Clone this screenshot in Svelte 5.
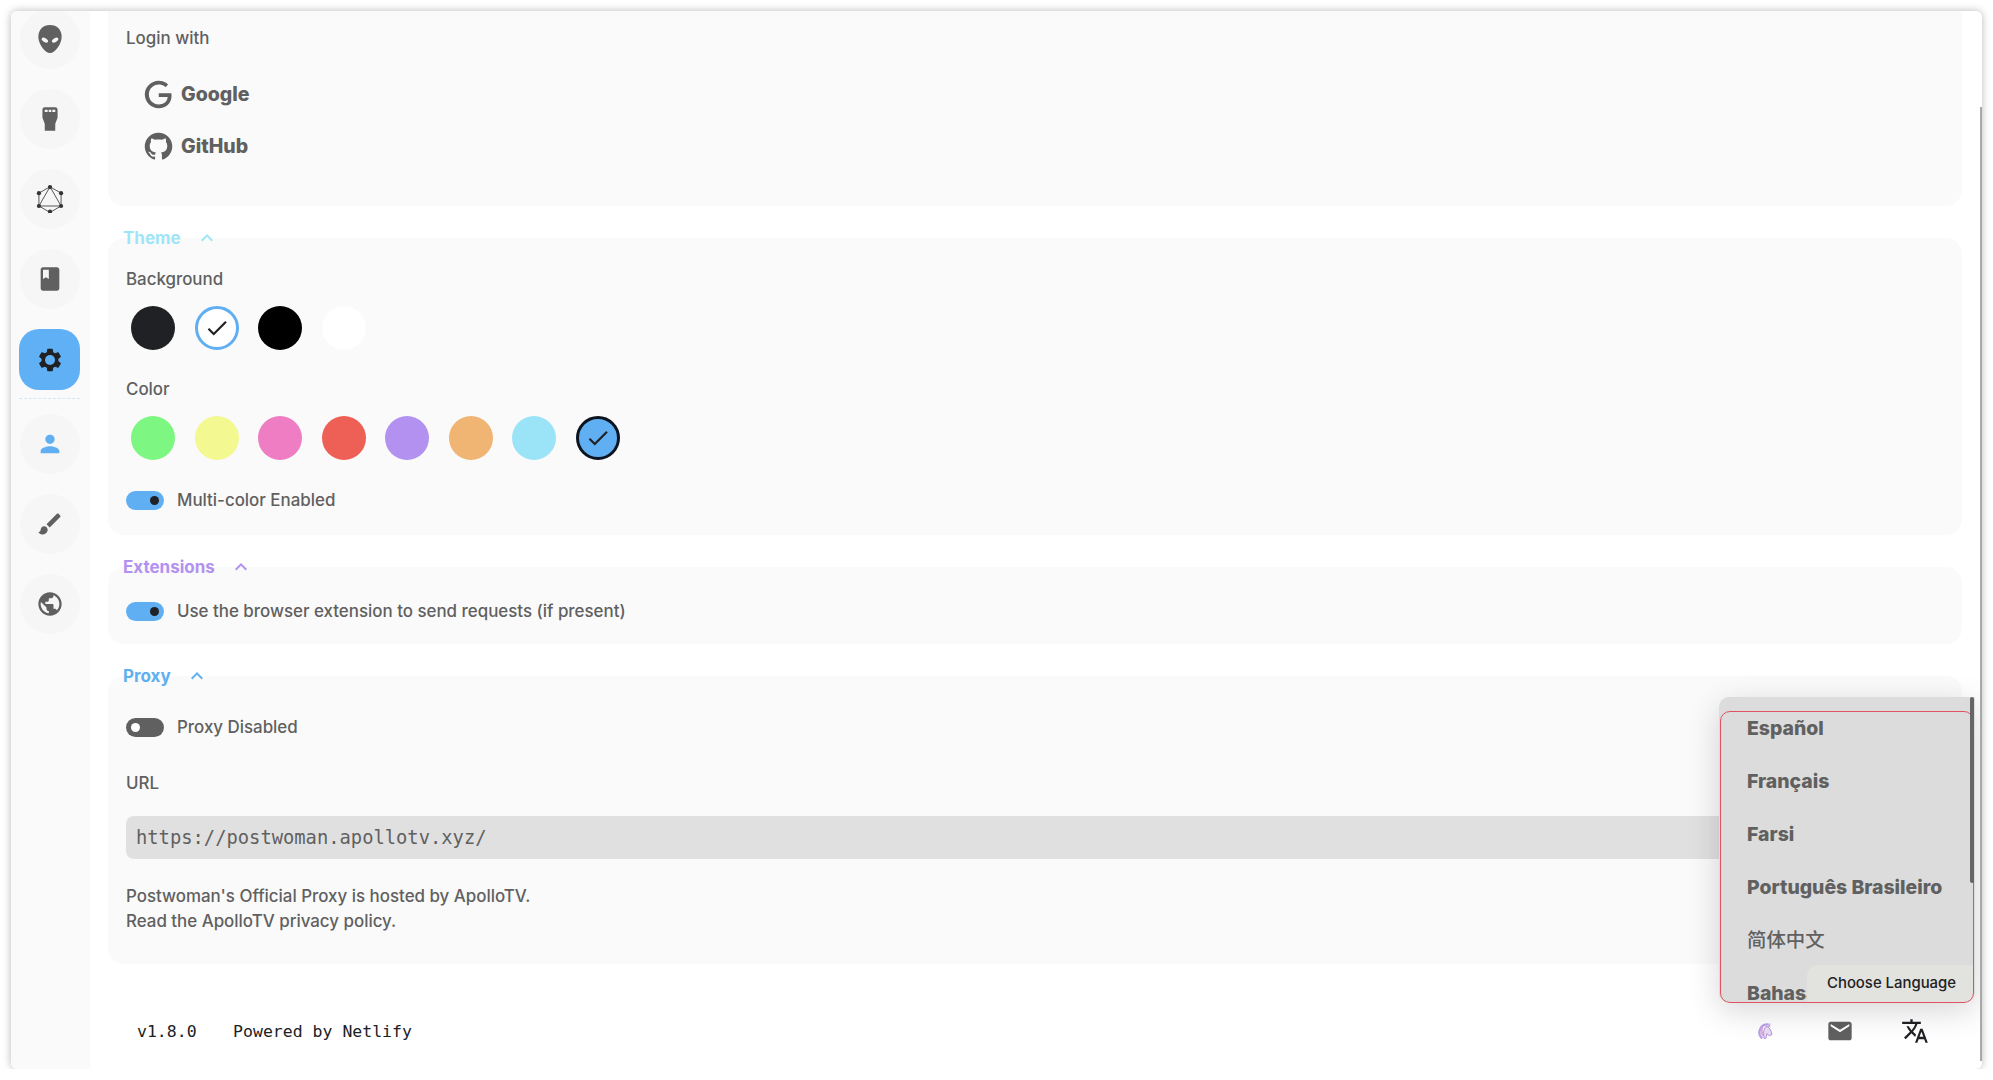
<script>
  // Settings page of the API client, scrolled down, with the language menu open.
  const paths = {
    book: 'M18 2H6c-1.1 0-2 .9-2 2v16c0 1.1.9 2 2 2h12c1.1 0 2-.9 2-2V4c0-1.1-.9-2-2-2zM6 4h5v8l-2.5-1.5L6 12V4z',
    settings: 'M19.14 12.94c.04-.3.06-.61.06-.94 0-.32-.02-.64-.07-.94l2.03-1.58c.18-.14.23-.41.12-.61l-1.92-3.32c-.12-.22-.37-.29-.59-.22l-2.39.96c-.5-.38-1.03-.7-1.62-.94l-.36-2.54c-.04-.24-.24-.41-.48-.41h-3.84c-.24 0-.43.17-.47.41l-.36 2.54c-.59.24-1.13.57-1.62.94l-2.39-.96c-.22-.08-.47 0-.59.22L2.74 8.87c-.12.21-.08.47.12.61l2.03 1.58c-.05.3-.09.63-.09.94s.02.64.07.94l-2.03 1.58c-.18.14-.23.41-.12.61l1.92 3.32c.12.22.37.29.59.22l2.39-.96c.5.38 1.03.7 1.62.94l.36 2.54c.05.24.24.41.48.41h3.84c.24 0 .44-.17.47-.41l.36-2.54c.59-.24 1.13-.56 1.62-.94l2.39.96c.22.08.47 0 .59-.22l1.92-3.32c.12-.22.07-.47-.12-.61l-2.01-1.58zM12 15.6c-1.98 0-3.6-1.62-3.6-3.6s1.62-3.6 3.6-3.6 3.6 1.62 3.6 3.6-1.62 3.6-3.6 3.6z',
    person: 'M12 12c2.21 0 4-1.79 4-4s-1.79-4-4-4-4 1.79-4 4 1.79 4 4 4zm0 2c-2.67 0-8 1.34-8 4v2h16v-2c0-2.66-5.33-4-8-4z',
    brush: 'M7 14c-1.66 0-3 1.34-3 3 0 1.31-1.16 2-2 2 .92 1.22 2.49 2 4 2 2.21 0 4-1.79 4-4 0-1.66-1.34-3-3-3zm13.71-9.37l-1.34-1.34c-.39-.39-1.02-.39-1.41 0L9 12.25 11.75 15l8.96-8.96c.39-.39.39-1.02 0-1.41z',
    globe: 'M12 2C6.48 2 2 6.48 2 12s4.48 10 10 10 10-4.48 10-10S17.52 2 12 2zm-1 17.93c-3.95-.49-7-3.85-7-7.93 0-.62.08-1.21.21-1.79L9 15v1c0 1.1.9 2 2 2v1.93zm6.9-2.54c-.26-.81-1-1.39-1.9-1.39h-1v-3c0-.55-.45-1-1-1H8v-2h2c.55 0 1-.45 1-1V7h2c1.1 0 2-.9 2-2v-.41c2.93 1.19 5 4.06 5 7.41 0 2.08-.8 3.97-2.1 5.39z',
    mail: 'M20 4H4c-1.1 0-1.99.9-1.99 2L2 18c0 1.1.9 2 2 2h16c1.1 0 2-.9 2-2V6c0-1.1-.9-2-2-2zm0 4l-8 5-8-5V6l8 5 8-5v2z',
    translate: 'M12.87 15.07l-2.54-2.51.03-.03c1.74-1.94 2.98-4.17 3.71-6.53H17V4h-7V2H8v2H1v1.99h11.17C11.5 7.92 10.44 9.75 9 11.35 8.07 10.32 7.3 9.19 6.69 8h-2c.73 1.63 1.73 3.17 2.98 4.56l-5.09 5.02L4 19l5-5 3.11 3.11.76-2.04zM18.5 10h-2L12 22h2l1.12-3h4.75L21 22h2l-4.5-12zm-2.62 7l1.62-4.33L19.12 17h-3.24z',
    chevron: 'M12 8l-6 6 1.41 1.41L12 10.83l4.59 4.58L18 14z',
    check: 'M9 16.17L4.83 12l-1.42 1.41L9 19 21 7l-1.41-1.41z',
    google: 'M21.35 11.1h-9.17v2.73h6.51c-.33 3.81-3.5 5.44-6.5 5.44C8.36 19.27 5 16.25 5 12c0-4.1 3.2-7.27 7.2-7.27 3.09 0 4.9 1.97 4.9 1.97L19 4.72S16.56 2 12.1 2C6.42 2 2.03 6.8 2.03 12c0 5.05 4.13 10 10.22 10 5.35 0 9.25-3.67 9.25-9.09 0-1.15-.15-1.81-.15-1.81z',
    github: 'M12 2A10 10 0 0 0 2 12c0 4.42 2.87 8.17 6.84 9.5.5.08.66-.23.66-.5v-1.69c-2.77.6-3.36-1.34-3.36-1.34-.46-1.16-1.11-1.47-1.11-1.47-.91-.62.07-.6.07-.6 1 .07 1.53 1.03 1.53 1.03.87 1.52 2.34 1.07 2.91.83.09-.65.35-1.09.63-1.34-2.22-.25-4.55-1.11-4.55-4.92 0-1.11.38-2 1.03-2.71-.1-.25-.45-1.29.1-2.64 0 0 .84-.27 2.75 1.02.79-.22 1.65-.33 2.5-.33.85 0 1.71.11 2.5.33 1.91-1.29 2.75-1.02 2.75-1.02.55 1.35.2 2.39.1 2.64.65.71 1.03 1.6 1.03 2.71 0 3.82-2.34 4.66-4.57 4.91.36.31.69.92.69 1.85V21c0 .27.16.59.67.5C19.14 20.16 22 16.42 22 12A10 10 0 0 0 12 2z'
  }

  const backgrounds = [
    { color: '#202124' },
    { color: '#ffffff', selected: true },
    { color: '#000000' },
    { color: '#ffffff' }
  ]

  const accents = [
    { color: '#7df782' },
    { color: '#f3f891' },
    { color: '#ee7dc3' },
    { color: '#ee5f55' },
    { color: '#b291f0' },
    { color: '#f0b473' },
    { color: '#9be4f8' },
    { color: '#60aff2', selected: true }
  ]

  const languages = ['Español', 'Français', 'Farsi', 'Português Brasileiro', '简体中文', 'Bahasa Indonesia']
</script>

<div class="window">
  <nav class="sidebar">
    <button class="nav-btn" aria-label="Home">
      <svg class="icon" viewBox="0 0 24 24">
        <path d="M12 0C6 0 2 4 2 10c0 6 5.5 14 10 14s10-8 10-14C22 4 18 0 12 0z" fill="#606060" />
        <ellipse cx="7.6" cy="13" rx="3" ry="1.7" transform="rotate(32 7.6 13)" fill="#f5f5f5" />
        <ellipse cx="16.4" cy="13" rx="3" ry="1.7" transform="rotate(-32 16.4 13)" fill="#f5f5f5" />
      </svg>
    </button>
    <button class="nav-btn" aria-label="Realtime">
      <svg class="icon" viewBox="0 0 24 24">
        <path d="M7.5 2h9a2 2 0 0 1 2 2v7l-2 5v6h-9v-6l-2-5V4a2 2 0 0 1 2-2z" fill="#606060" />
        <path d="M7.500 5h2.500M10.900 5h2.200M14 5h2.500" stroke="#f5f5f5" stroke-width="2" />
      </svg>
    </button>
    <button class="nav-btn" aria-label="GraphQL">
      <svg class="icon" viewBox="0 0 24 24" fill="none" stroke="#333" stroke-width=".7">
        <path d="M12 1.500l9.500 5.500v11L12 23.500 2.500 18V7z" />
        <path d="M12 1.500L21.500 18h-19z" />
        <g fill="#333" stroke="none">
          <circle cx="12" cy="1.800" r="1.800" />
          <circle cx="21.500" cy="7" r="1.800" />
          <circle cx="21.500" cy="18" r="1.800" />
          <circle cx="12" cy="22.800" r="1.800" />
          <circle cx="2.500" cy="18" r="1.800" />
          <circle cx="2.500" cy="7" r="1.800" />
        </g>
      </svg>
    </button>
    <button class="nav-btn" aria-label="Docs">
      <svg class="icon" viewBox="0 0 24 24"><path d={paths.book} fill="#606060" /></svg>
    </button>
    <button class="nav-btn active" aria-label="Settings">
      <svg class="icon" viewBox="0 0 24 24"><path d={paths.settings} fill="#202124" /></svg>
    </button>
    <div class="nav-divider"></div>
    <button class="nav-btn" aria-label="Account">
      <svg class="icon" viewBox="0 0 24 24"><path d={paths.person} fill="#60aff2" /></svg>
    </button>
    <button class="nav-btn" aria-label="Theme">
      <svg class="icon" viewBox="0 0 24 24"><path d={paths.brush} fill="#606060" /></svg>
    </button>
    <button class="nav-btn" aria-label="Language">
      <svg class="icon" viewBox="0 0 24 24"><path d={paths.globe} fill="#606060" /></svg>
    </button>
  </nav>

  <div class="main">
    <div class="content">
      <fieldset class="card login">
        <div class="label">Login with</div>
        <button class="login-btn">
          <svg viewBox="0 0 24 24"><path d={paths.google} /></svg>
          Google
        </button>
        <button class="login-btn">
          <svg viewBox="0 0 24 24"><path d={paths.github} /></svg>
          GitHub
        </button>
      </fieldset>

      <fieldset class="card theme">
        <legend class="cyan">
          Theme
          <svg viewBox="0 0 24 24"><path d={paths.chevron} /></svg>
        </legend>
        <div class="label">Background</div>
        <div class="swatches">
          {#each backgrounds as s}
            <span class="swatch" class:ring-blue={s.selected} style="background:{s.color}">
              {#if s.selected}<svg viewBox="0 0 24 24"><path d={paths.check} /></svg>{/if}
            </span>
          {/each}
        </div>
        <div class="label">Color</div>
        <div class="swatches">
          {#each accents as s}
            <span class="swatch" class:ring-dark={s.selected} style="background:{s.color}">
              {#if s.selected}<svg viewBox="0 0 24 24"><path d={paths.check} /></svg>{/if}
            </span>
          {/each}
        </div>
        <div class="toggle-row">
          <span class="toggle on"></span>
          Multi-color Enabled
        </div>
      </fieldset>

      <fieldset class="card ext">
        <legend class="purple">
          Extensions
          <svg viewBox="0 0 24 24"><path d={paths.chevron} /></svg>
        </legend>
        <div class="toggle-row first">
          <span class="toggle on"></span>
          Use the browser extension to send requests (if present)
        </div>
      </fieldset>

      <fieldset class="card proxy-card">
        <legend class="blue">
          Proxy
          <svg viewBox="0 0 24 24"><path d={paths.chevron} /></svg>
        </legend>
        <div class="toggle-row proxy">
          <span class="toggle off"></span>
          Proxy Disabled
        </div>
        <div class="label url">URL</div>
        <input class="url-input" type="url" value="https://postwoman.apollotv.xyz/" />
        <p class="note">
          Postwoman's Official Proxy is hosted by ApolloTV.<br />
          Read the ApolloTV privacy policy.
        </p>
      </fieldset>
    </div>

    <footer class="footer">
      <span class="version">v1.8.0</span>
      <span class="powered">Powered by Netlify</span>
      <div class="footer-icons">
        <button class="foot-btn" aria-label="Made with love">
          <svg class="unicorn" viewBox="0 0 24 24" fill="none">
            <path d="M16 5c-5-1-9 2-10 7-.6 3 .5 6 3 8" stroke="#b9a0e8" stroke-width="2.600" />
            <path d="M9 8c-1 3-1 6 1 9" stroke="#e3a6d8" stroke-width="2.200" />
            <path d="M13 7c3 0 6 4 6.500 9l-3 1-2.500-2-1 5h-2c-1-5-1-9 2-13z" fill="#eadcf2" stroke="#a78bd8" stroke-width="1" />
            <path d="M15 7l3-4-.5 5z" fill="#c9a5de" />
          </svg>
        </button>
        <button class="foot-btn" aria-label="Contact">
          <svg class="icon" viewBox="0 0 24 24"><path d={paths.mail} fill="#606060" /></svg>
        </button>
        <button class="foot-btn" aria-label="Choose Language">
          <svg class="icon" viewBox="0 0 24 24"><path d={paths.translate} fill="#202124" /></svg>
        </button>
      </div>
    </footer>
  </div>

  <div class="popover">
    <ul class="lang-list">
      {#each languages as lang}
        <li class:cjk={lang === '简体中文'}>{lang}</li>
      {/each}
    </ul>
    <div class="tooltip">Choose Language</div>
    <div class="focus-ring"></div>
    <div class="thumb"></div>
  </div>

  <div class="page-scrollbar"></div>
</div>

<style>
  :global(body) {
    background: #fff;
    font-family: Inter, "Noto Sans CJK SC", sans-serif;
    color: #606060;
  }
  .window {
    position: relative;
    box-sizing: border-box;
    margin: 11px 11px 0;
    height: 1058px;
    display: grid;
    grid-template-columns: 79px 1fr;
    border-radius: 6px;
    overflow: hidden;
    background: #fff;
    box-shadow: 0 0 8px rgba(0, 0, 0, 0.28);
  }
  button {
    border: none;
    background: none;
    padding: 0;
    font: inherit;
    color: inherit;
    cursor: pointer;
  }
  .icon {
    width: 28px;
    height: 28px;
    display: block;
  }

  .sidebar {
    background: #fafafa;
    display: flex;
    flex-direction: column;
    align-items: center;
    gap: 20px;
    margin-top: -2px;
    padding-right: 2px;
  }
  .nav-btn {
    width: 60px;
    height: 60px;
    flex: none;
    border-radius: 50%;
    background: #f6f6f6;
    display: flex;
    align-items: center;
    justify-content: center;
  }
  .nav-btn.active {
    background: #60b0f6;
    border-radius: 20px;
    position: relative;
    width: 61px;
    height: 61px;
  }
  .nav-btn.active::after {
    content: "";
    position: absolute;
    width: 10px;
    height: 10px;
    border-radius: 50%;
    background: #60b0f6;
  }
  .nav-divider {
    width: 61px;
    flex: none;
    border-top: 1px dashed #d8e4ee;
    margin: -12px 0 -5px;
  }

  .main {
    min-width: 0;
    display: flex;
    flex-direction: column;
  }
  .content {
    flex: 1;
    min-height: 0;
    overflow: hidden;
    padding: 0 20px 0 18px;
  }
  .card {
    margin: 20px 0 0;
    padding: 0 18px 20px;
    border: none;
    border-radius: 16px;
    background: #fafafa;
    min-width: 0;
    display: block;
  }
  .card.login {
    margin-top: -20px;
    padding-top: 35px;
    padding-bottom: 34px;
  }
  .card.theme { padding-bottom: 23px; }
  .card.ext { padding-bottom: 21px; }
  .card.proxy-card { padding-bottom: 30px; }
  legend {
    padding: 0;
    margin-left: -3px;
    height: 24px;
    line-height: 24px;
    font-size: 17px;
    font-weight: 700;
    display: flex;
    align-items: center;
  }
  legend svg {
    width: 24px;
    height: 24px;
    margin-left: 14px;
    fill: currentColor;
  }
  .cyan { color: #9fe5f8; }
  .purple { color: #b291f0; }
  .blue { color: #5fb0f0; }

  .label {
    font-size: 16.9px;
    font-weight: 500;
    line-height: 24px;
  }
  .theme .label { margin-top: 17px; }
  .theme .swatches + .label { margin-top: 27px; }

  .login-btn {
    display: flex;
    align-items: center;
    gap: 6px;
    height: 52px;
    margin-left: 18px;
    font-size: 19.5px;
    font-weight: 800;
  }
  .login .label + .login-btn { margin-top: 18px; }
  .login-btn svg {
    width: 33px;
    height: 33px;
    margin-left: -2px;
    fill: #606060;
  }

  .swatches {
    display: flex;
    gap: 19.5px;
    padding-left: 5px;
    margin-top: 15px;
  }
  .swatch {
    width: 44px;
    height: 44px;
    box-sizing: border-box;
    border-radius: 50%;
    display: flex;
    align-items: center;
    justify-content: center;
  }
  .swatch svg {
    width: 26px;
    height: 26px;
    fill: #202124;
  }
  .ring-blue { border: 3.5px solid #60aff2; }
  .ring-dark { border: 3.5px solid #0c1420; }

  .toggle-row {
    display: flex;
    align-items: center;
    gap: 13px;
    height: 24px;
    margin-top: 28px;
    font-size: 16.9px;
    font-weight: 500;
  }
  .toggle-row.first { margin-top: 20px; }
  .toggle-row.proxy { margin-top: 27px; }
  .toggle {
    width: 38px;
    height: 19px;
    border-radius: 10px;
    position: relative;
    flex: none;
  }
  .toggle::after {
    content: "";
    position: absolute;
    top: 5px;
    width: 9px;
    height: 9px;
    border-radius: 50%;
  }
  .toggle.on { background: #60aff2; }
  .toggle.on::after { right: 5px; background: #202124; }
  .toggle.off { background: #606060; }
  .toggle.off::after { left: 5px; background: #fff; }

  .label.url {
    margin-top: 32px;
  }
  .url-input {
    display: block;
    box-sizing: border-box;
    width: 100%;
    height: 43px;
    margin-top: 21px;
    padding: 0 10px;
    border: none;
    border-radius: 8px;
    outline: none;
    background: #e0e0e0;
    color: #606060;
    font-family: "DejaVu Sans Mono", monospace;
    font-size: 18.8px;
  }
  .note {
    margin: 25px 0 0;
    font-size: 16.9px;
    font-weight: 500;
    line-height: 25px;
  }

  .footer {
    flex: none;
    height: 76px;
    display: flex;
    align-items: center;
    font-family: "DejaVu Sans Mono", monospace;
    font-size: 16.5px;
    color: #202124;
  }
  .version { margin-left: 47px; }
  .powered { margin-left: 36.5px; }
  .footer-icons {
    margin-left: auto;
    margin-right: 30px;
    display: flex;
  }
  .foot-btn {
    width: 75px;
    display: flex;
    justify-content: center;
  }
  .unicorn {
    width: 22px;
    height: 22px;
    margin-top: 3px;
  }

  .popover {
    position: absolute;
    left: 1708px;
    top: 686px;
    width: 256px;
    height: 306px;
    border-radius: 10px 0 10px 10px;
    overflow: hidden;
    background: #dcdcdc;
    box-shadow: 0 8px 32px rgba(0, 0, 0, 0.16);
  }
  .lang-list {
    list-style: none;
    margin: 0;
    padding: 5px 0 0 28px;
    font-size: 19.4px;
    font-weight: 800;
    line-height: 53px;
    white-space: nowrap;
  }
  .lang-list .cjk {
    font-weight: 500;
  }
  .focus-ring {
    position: absolute;
    inset: 14px 1px 0;
    border: 1px solid #e0525f;
    border-radius: 10px;
  }
  .thumb {
    position: absolute;
    right: 1px;
    top: 0;
    width: 4px;
    height: 186px;
    border-radius: 2px;
    background: #666;
  }
  .tooltip {
    position: absolute;
    right: 1px;
    bottom: 1px;
    width: 167px;
    height: 37px;
    box-sizing: border-box;
    padding-left: 20px;
    border-radius: 10px 0 0 0;
    background: #e2e2df;
    color: #202124;
    font-size: 14.9px;
    font-weight: 500;
    line-height: 36px;
  }
  .page-scrollbar {
    position: absolute;
    right: 0;
    top: 96px;
    bottom: 8px;
    width: 2px;
    background: #a8a8a8;
  }
</style>
